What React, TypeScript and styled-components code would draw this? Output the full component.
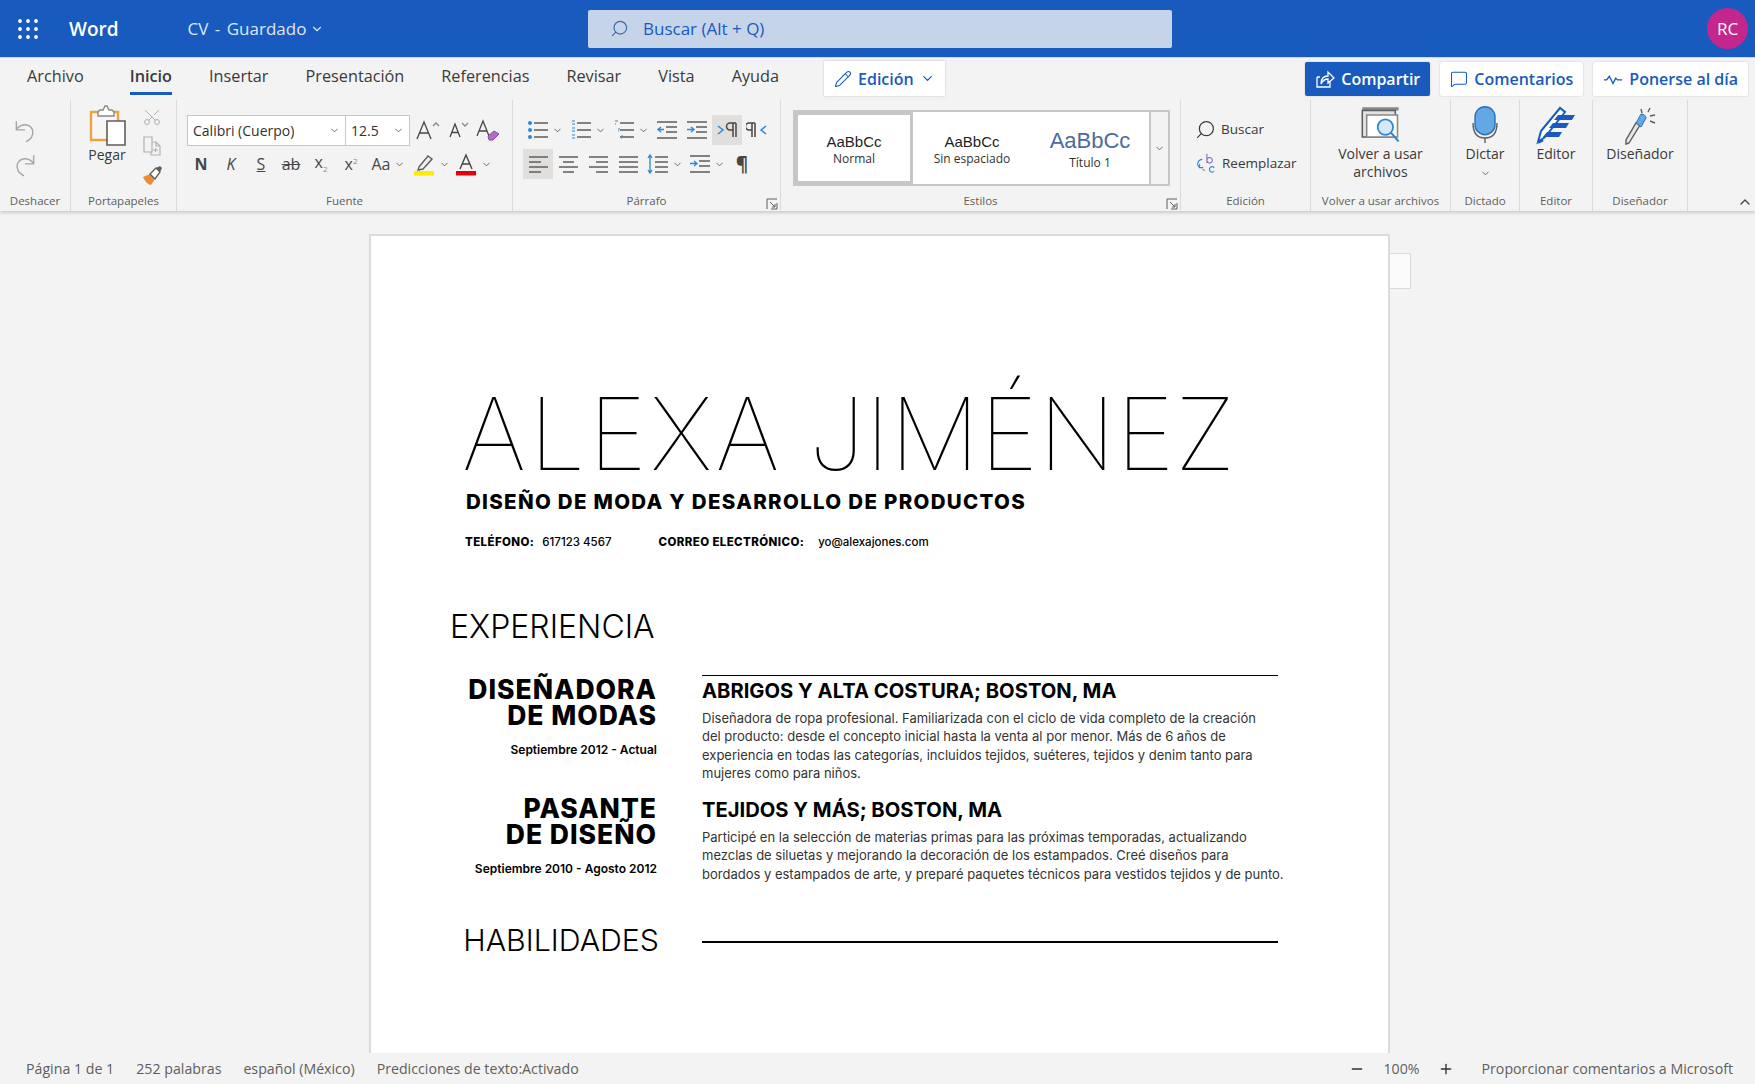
import { Fragment } from "react";
import styled, { createGlobalStyle } from "styled-components";
import {
  Scissors,
  Search,
  Pencil,
  MessageSquare,
  ChevronDown,
  ChevronUp,
  Plus,
  Minus,
} from "lucide-react";

const UI_FONT = `"Open Sans", "Noto Sans", sans-serif`;
const DOC_FONT = `Inter, "Open Sans", sans-serif`;
const BLUE = "#185abd";
const GREY = "#605e5c";
const SKY = "#2b88d8";
const CHROME = "#f3f3f3";

const GlobalStyle = createGlobalStyle`
  html, body {
    margin: 0;
    padding: 0;
    height: 100%;
    overflow: hidden;
    background: ${CHROME};
    font-family: ${UI_FONT};
  }
  #root { height: 100%; }
`;

/* ---------- drawn icons ---------- */

type IconProps = { size?: number };

const Waffle = () => (
  <svg width="20" height="20" viewBox="0 0 20 20" fill="#fff">
    {[2, 10, 18].flatMap((y) =>
      [2, 10, 18].map((x) => <circle key={`${x}-${y}`} cx={x} cy={y} r="1.9" />)
    )}
  </svg>
);

const UndoIcon = ({ flip }: { flip?: boolean }) => (
  <svg
    width="26"
    height="26"
    viewBox="0 0 24 24"
    fill="none"
    stroke="#a8a6a4"
    strokeWidth="1.3"
    style={flip ? { transform: "scaleX(-1)" } : undefined}
  >
    <path d="M4 3v8h8" />
    <path d="M4 11c3-5 9-6 13-3 4 4 2 10-1 12l-3 2" />
  </svg>
);

const ClipboardIcon = () => (
  <svg width="42" height="42" viewBox="0 0 42 42" fill="none">
    <path d="M5 7h27v28H5z" fill="#f7f6f5" stroke="#eba23f" strokeWidth="2.4" />
    <path d="M12 7l2-2h3l2-4h2l2 4h3l2 2v4H12z" fill="#fff" stroke="#8a8886" strokeWidth="1.4" />
    <path d="M21 16h18v24H21z" fill="#fff" stroke="#605e5c" strokeWidth="1.6" />
  </svg>
);

const CopyIcon = () => (
  <svg width="22" height="22" viewBox="0 0 22 22" fill="none" stroke="#b4b2b0" strokeWidth="1.2">
    <path d="M3 2h8v15H3z" />
    <path d="M11 7h4l4 4v9h-9v-3" />
    <path d="M15 7v4h4M12 15h5M14.5 13v4" />
  </svg>
);

const BrushIcon = () => (
  <svg width="22" height="22" viewBox="0 0 22 22">
    <path d="M2 12l7-3 5 5-4 6c-2 0-6-3-8-8z" fill="#ed8b34" />
    <path d="M9 9l6-6 4 4-5 7z" fill="#fff" stroke="#605e5c" strokeWidth="1.3" />
    <path d="M15 3l4-2 2 2-2 4z" fill="#605e5c" />
  </svg>
);

const GrowFont = ({ down }: { down?: boolean }) => (
  <svg width="28" height="24" viewBox="0 0 28 24" fill="none" stroke="#484644" strokeWidth="1.3">
    <path d={down ? "M6 19l5-13 5 13M8 14.5h6" : "M3 21L10 4l7 17M5.5 15h9"} />
    <path d={down ? "M18 5l3 3 3-3" : "M19 8l3-3 3 3"} stroke="#8a8886" />
  </svg>
);

const ClearFormat = () => (
  <svg width="26" height="24" viewBox="0 0 26 24" fill="none">
    <path d="M2 18L8 3l6 15M4 13h8" stroke="#484644" strokeWidth="1.3" />
    <path d="M13 18l6-5 5 3-6 6h-4z" fill="#b16cc4" stroke="#8e44ad" />
  </svg>
);

const Highlighter = () => (
  <svg width="24" height="24" viewBox="0 0 24 24" fill="none">
    <path d="M7 15L16 4l4 3-9 10-5 1z" stroke="#605e5c" strokeWidth="1.4" fill="#f3f2f1" />
    <rect x="2" y="19" width="20" height="4.5" fill="#ffeb00" />
  </svg>
);

const FontColor = () => (
  <svg width="24" height="24" viewBox="0 0 24 24" fill="none">
    <path d="M6 17L12 3l6 14M8 12h8" stroke="#484644" strokeWidth="1.4" />
    <rect x="2" y="19" width="20" height="4.5" fill="#e3000f" />
  </svg>
);

const linePath = (rows: number[], x1: number, x2: number) =>
  rows.map((y) => `M${x1} ${y}H${x2}`).join("");

const ListIcon = ({ kind }: { kind: "bullet" | "number" | "multi" }) => (
  <svg width="22" height="22" viewBox="0 0 22 22" fill="none">
    <path d={linePath([4, 11, 18], 7, 21)} stroke="#605e5c" strokeWidth="1.3" />
    {kind === "bullet" &&
      [4, 11, 18].map((y) => <circle key={y} cx="3" cy={y} r="2" fill={SKY} />)}
    {kind === "number" && <path d={linePath([2, 5, 9, 12, 16, 19], 2, 5)} stroke={SKY} strokeWidth="1.1" />}
    {kind === "multi" && <path d="M2 2h3M2 5h1M5 10h2M5 12h1M8 17h2M8 19h1" stroke={SKY} strokeWidth="1.2" />}
  </svg>
);

const IndentIcon = ({ inward }: { inward?: boolean }) => (
  <svg width="22" height="22" viewBox="0 0 22 22" fill="none">
    <path d={`M1 3H21M1 19H21${linePath([8, 13], 10, 21)}`} stroke="#605e5c" strokeWidth="1.3" />
    <path d={inward ? "M1 10.5H7M5 8l3 2.5-3 2.5" : "M2 10.5H8M5 8l-3 2.5 3 2.5"} stroke={SKY} strokeWidth="1.4" />
  </svg>
);

const AlignIcon = ({ mode }: { mode: "left" | "center" | "right" | "justify" }) => {
  const short = { left: [2, 14], center: [6, 17], right: [9, 21], justify: [2, 21] }[mode];
  return (
    <svg width="22" height="22" viewBox="0 0 22 22" fill="none" stroke="#605e5c" strokeWidth="1.3">
      <path d={`M2 4H21M${short[0]} 9H${short[1]}M2 14H21M${short[0]} 19H${short[1]}`} />
    </svg>
  );
};

const SpacingIcon = ({ indent }: { indent?: boolean }) => (
  <svg width="22" height="22" viewBox="0 0 22 22" fill="none">
    <path d={indent ? `M1 3H21M1 19H21${linePath([8, 13], 10, 21)}` : linePath([4, 9, 14, 19], 8, 21)} stroke="#605e5c" strokeWidth="1.3" />
    <path d={indent ? "M1 10.5H7M5 8l3 2.5-3 2.5" : "M3 3V19M1 5l2-3 2 3M1 17l2 3 2-3"} stroke={SKY} strokeWidth="1.3" />
  </svg>
);

const DirectionIcon = ({ rtl }: { rtl?: boolean }) => (
  <svg width="22" height="18" viewBox="0 0 22 18" fill="none">
    {rtl ? (
      <>
        <path d="M9 2H3a3.5 3.5 0 0 0 0 7h3M6 2v14M9 2v14" stroke="#484644" strokeWidth="1.5" />
        <path d="M20 5l-5 4 5 4" stroke={SKY} strokeWidth="1.5" />
      </>
    ) : (
      <>
        <path d="M2 5l5 4-5 4" stroke={SKY} strokeWidth="1.5" />
        <path d="M20 2h-6a3.5 3.5 0 0 0 0 7h3M17 2v14M20 2v14" stroke="#484644" strokeWidth="1.5" />
      </>
    )}
  </svg>
);

const Launcher = () => (
  <svg width="12" height="12" viewBox="0 0 12 12" fill="none" stroke="#605e5c" strokeWidth="1">
    <path d="M1 11V1h10M11 5v6H5M4 4l5 5M9 6v3H6" />
  </svg>
);

const ReplaceIcon = () => (
  <svg width="22" height="24" viewBox="0 0 24 24" fill="none" stroke={SKY} strokeWidth="1.2">
    <path d="M13 2v10M13 8.5a3 3 0 1 1 0 1" stroke="#8e6bb5" />
    <path d="M8 8a5 5 0 0 0-3 9M5 13v4h4" />
    <path d="M21 17a3 3 0 1 0 0 4" stroke="#2b88d8" />
    <path d="M11 20a5 5 0 0 1-3-1" stroke="#8a8886" />
  </svg>
);

const ReuseIcon = () => (
  <svg width="44" height="40" viewBox="0 0 40 36" fill="none">
    <path d="M3 1h33v3H3z" fill="#8a8886" />
    <path d="M3 4h30v24H3z" fill="#e4e3e2" stroke="#605e5c" strokeWidth="1.4" />
    <path d="M7 8h28v20H7z" fill="#fff" stroke="#8a8886" strokeWidth="1.4" />
    <circle cx="24" cy="19" r="7" fill="#d6e9f8" stroke={SKY} strokeWidth="1.6" />
    <path d="M29 24l7 8" stroke={SKY} strokeWidth="2" />
  </svg>
);

const MicIcon = () => (
  <svg width="28" height="37" viewBox="0 0 28 37" fill="none">
    <rect x="4" y="0.7" width="20" height="28" rx="10" fill="#62a8e5" stroke="#2b6fb5" strokeWidth="1.4" />
    <path d="M2 17c0 10 4 15 12 15s12-5 12-15M14 32v5" stroke="#605e5c" strokeWidth="1.4" />
  </svg>
);

const EditorIcon = () => (
  <svg width="40" height="40" viewBox="0 0 40 40" fill="none">
    <path d="M2 36l3-11L24 2l5 4L9 31z" fill="#fff" stroke={BLUE} strokeWidth="2" />
    <path d="M2 38l3-5 3 2z" fill={BLUE} />
    <path d="M22 9h17l-3 5H18zM17 17h16l-3 5H13zM11 26h15l-3 5H7z" fill={BLUE} />
  </svg>
);

const DesignerIcon = () => (
  <svg width="34" height="40" viewBox="0 0 34 40" fill="none">
    <path d="M3 38l3-1 11-18-4-2L3 34z" fill="#e8e7e6" stroke="#605e5c" strokeWidth="1.4" />
    <path d="M13 17l5-9c3 0 5 2 5 4l-5 9z" fill="#62a8e5" stroke="#2b6fb5" />
    <path d="M18 3l1 4M27 2l-2 4M32 9l-5 1M32 17l-5-2" stroke="#605e5c" strokeWidth="1.4" />
  </svg>
);

const ShareIcon = ({ size = 20 }: IconProps) => (
  <svg width={size} height={size} viewBox="0 0 20 20" fill="none" stroke="#fff" strokeWidth="1.3">
    <path d="M2 8h3M2 8v10h13v-5" />
    <path d="M6 15c0-6 3-8 7-8V3l6 6-6 5v-4c-3 0-5 1-7 5z" />
  </svg>
);

const PulseIcon = () => (
  <svg width="20" height="14" viewBox="0 0 22 14" fill="none" stroke={BLUE} strokeWidth="1.5">
    <path d="M1 8h3l3-4 4 8 3-6 2 2h5" />
  </svg>
);

/* ---------- shell ---------- */

const Shell = styled.div`
  display: flex;
  flex-direction: column;
  height: 1084px;
  overflow: hidden;
`;

const TitleBar = styled.header`
  display: grid;
  grid-template-columns: 588px 584px 1fr;
  align-items: center;
  height: 57px;
  background: ${BLUE};
  border-bottom: 1px solid #c4dcf4;
  color: #fff;
`;

const TitleLeft = styled.div`
  display: flex;
  align-items: center;
  padding-left: 18px;
`;

const AppName = styled.span`
  margin-left: 31px;
  font-size: 19px;
  font-weight: 600;
`;

const DocName = styled.span`
  display: flex;
  align-items: center;
  gap: 4px;
  margin-left: 69px;
  font-size: 17px;
  color: #dfe8f6;
  word-spacing: 2px;
`;

const SearchBox = styled.div`
  display: flex;
  align-items: center;
  gap: 14px;
  height: 38px;
  padding-left: 22px;
  box-sizing: border-box;
  background: #c6d4ea;
  border-radius: 2px;
  color: ${BLUE};
  font-size: 17px;
  svg {
    transform: scaleX(-1);
    color: #3f6aa8;
  }
`;

const TitleRight = styled.div`
  display: flex;
  justify-content: flex-end;
  padding-right: 7px;
`;

const Avatar = styled.div`
  display: flex;
  align-items: center;
  justify-content: center;
  width: 41px;
  height: 41px;
  border-radius: 50%;
  background: #c4268c;
  font-size: 17px;
`;

const TabRow = styled.nav`
  display: flex;
  align-items: flex-start;
  height: 42px;
  padding-left: 27px;
  padding-right: 7px;
`;

const Tab = styled.div<{ $active?: boolean }>`
  height: 34px;
  margin-right: 37px;
  line-height: 36px;
  font-size: 16.25px;
  color: #3b3a39;
  font-weight: ${(p) => (p.$active ? 600 : 400)};
  border-bottom: ${(p) => (p.$active ? `3px solid ${BLUE}` : "3px solid transparent")};
  &:first-child {
    margin-right: 46px;
  }
`;

const ModeButton = styled.div`
  display: flex;
  align-items: center;
  gap: 6px;
  height: 35px;
  margin-top: 3px;
  margin-left: 8px;
  padding: 0 10px;
  background: #fff;
  color: ${BLUE};
  font-size: 16px;
  font-weight: 600;
  box-shadow: 0 0 2px rgba(0, 0, 0, 0.2);
`;

const TabActions = styled.div`
  display: flex;
  gap: 10px;
  margin-left: auto;
  margin-top: 4px;
`;

const ActionButton = styled.div<{ $primary?: boolean }>`
  display: flex;
  align-items: center;
  gap: 6px;
  height: 34px;
  padding: 0 10px;
  border-radius: 2px;
  font-size: 16px;
  font-weight: 600;
  background: ${(p) => (p.$primary ? BLUE : "#fff")};
  color: ${(p) => (p.$primary ? "#fff" : BLUE)};
  box-shadow: 0 0 2px rgba(0, 0, 0, 0.2);
`;

/* ---------- ribbon ---------- */

const Ribbon = styled.section`
  display: flex;
  position: relative;
  z-index: 1;
  height: 111px;
  background: ${CHROME};
  box-shadow: 0 2px 3px rgba(0, 0, 0, 0.16);
`;

const Group = styled.div<{ $width: number }>`
  position: relative;
  display: flex;
  flex-direction: column;
  flex: none;
  width: ${(p) => p.$width}px;
  box-sizing: border-box;
  border-right: 1px solid #dcdbda;
`;

const GroupBody = styled.div<{ $pad?: number }>`
  flex: 1;
  display: flex;
  min-height: 0;
  padding-left: ${(p) => p.$pad ?? 0}px;
`;

const GroupLabel = styled.div`
  height: 21px;
  line-height: 21px;
  text-align: center;
  font-size: 11.5px;
  color: ${GREY};
`;

const LauncherSlot = styled.div`
  position: absolute;
  right: 2px;
  bottom: 1px;
  display: flex;
`;

const CollapseSlot = styled.div`
  position: absolute;
  right: 2px;
  bottom: 1px;
  color: #484644;
  display: flex;
`;

const ToolStack = styled.div`
  display: flex;
  flex-direction: column;
  gap: 4px;
  padding-top: 15px;
`;

const ToolRow = styled.div`
  display: flex;
  align-items: center;
  height: 30px;
`;

const ToolButton = styled.div<{ $w?: number; $active?: boolean }>`
  display: flex;
  align-items: center;
  justify-content: center;
  gap: 3px;
  flex: none;
  width: ${(p) => p.$w ?? 30}px;
  height: 30px;
  color: #484644;
  background: ${(p) => (p.$active ? "#e1dfdd" : "transparent")};
`;

const Caret = styled(ChevronDown).attrs({ size: 11, strokeWidth: 2 })`
  color: #605e5c;
  flex: none;
`;

const Glyph = styled.span<{ $bold?: boolean; $italic?: boolean; $under?: boolean; $strike?: boolean; $big?: boolean }>`
  font-size: ${(p) => (p.$big ? 19 : 16)}px;
  line-height: 1;
  font-weight: ${(p) => (p.$bold ? 700 : 400)};
  font-style: ${(p) => (p.$italic ? "italic" : "normal")};
  text-decoration: ${(p) => (p.$under ? "underline" : p.$strike ? "line-through" : "none")};
  color: #484644;
  sub, sup {
    font-size: 8px;
    color: #8a8886;
  }
`;

const FontBox = styled.div<{ $w: number }>`
  display: flex;
  align-items: center;
  justify-content: space-between;
  box-sizing: border-box;
  flex: none;
  width: ${(p) => p.$w}px;
  height: 31px;
  padding: 0 5px 0 5px;
  background: #fff;
  border: 1px solid #c8c6c4;
  font-size: 14px;
  color: #323130;
  & + & {
    border-left: none;
  }
`;

const FontPicker = styled.div`
  display: flex;
  margin-left: 10px;
  margin-right: 3px;
`;

const FontPickerSpacer = styled.div`
  width: 9px;
  flex: none;
`;

const UndoStack = styled.div`
  display: flex;
  flex-direction: column;
  align-items: center;
  gap: 8px;
  width: 100%;
  padding: 18px 20px 0 0;
  box-sizing: border-box;
`;

const PasteColumn = styled.div`
  display: flex;
  flex-direction: column;
  align-items: center;
  gap: 0;
  width: 60px;
  padding-top: 5px;
  font-size: 14px;
  line-height: 16px;
  color: #3b3a39;
`;

const ClipTools = styled.div`
  display: flex;
  flex-direction: column;
  align-items: center;
  gap: 8px;
  padding-top: 7px;
  width: 30px;
  color: #b4b2b0;
`;

const UprightScissors = styled(Scissors)`
  transform: rotate(-90deg);
`;

const Gallery = styled.div`
  display: flex;
  width: 377px;
  height: 76px;
  margin: 10px 0 0 12px;
  box-sizing: border-box;
  background: #fff;
  border: 2px solid #c8c6c4;
`;

const StyleCell = styled.div<{ $w: number; $selected?: boolean; $heading?: boolean }>`
  display: flex;
  flex-direction: column;
  align-items: center;
  justify-content: center;
  flex: none;
  width: ${(p) => p.$w}px;
  box-sizing: border-box;
  padding-top: 3px;
  border: ${(p) => (p.$selected ? "3px solid #c8c6c4" : "none")};
  color: #323130;
  font-size: 12px;
  line-height: 16px;
  gap: ${(p) => (p.$heading ? 1 : 0)}px;
`;

const StyleSample = styled.span<{ $heading?: boolean }>`
  font-family: "Liberation Sans", ${UI_FONT};
  font-size: ${(p) => (p.$heading ? 22 : 15)}px;
  line-height: ${(p) => (p.$heading ? 26 : 18)}px;
  color: ${(p) => (p.$heading ? "#4d6a9e" : "#201f1e")};
`;

const GalleryMore = styled.div`
  flex: 1;
  display: flex;
  align-items: center;
  justify-content: center;
  border-left: 2px solid #c8c6c4;
  background: ${CHROME};
`;

const EditTools = styled.div`
  display: flex;
  flex-direction: column;
  gap: 10px;
  padding: 17px 0 0 14px;
  font-size: 13.5px;
  color: #3b3a39;
`;

const EditRow = styled.div`
  display: flex;
  align-items: center;
  gap: 5px;
  height: 24px;
  svg {
    flex: none;
  }
`;

const MirroredSearch = styled(Search)`
  transform: scaleX(-1);
`;

const BigTool = styled.div`
  flex: 1;
  display: flex;
  flex-direction: column;
  align-items: center;
  text-align: center;
  font-size: 14px;
  line-height: 18px;
  color: #3b3a39;
  padding-top: 6px;
`;

const BigIconSlot = styled.div`
  height: 39px;
  display: flex;
  align-items: flex-start;
  justify-content: center;
`;

const DictateCaret = styled(Caret)`
  margin-top: 5px;
`;

const Spacer = styled.div`
  flex: 1;
  position: relative;
`;

/* ---------- document ---------- */

const DocArea = styled.main`
  flex: 1;
  min-height: 0;
  overflow: hidden;
  padding: 23px 0 0 369px;
  background: ${CHROME};
`;

const Page = styled.article`
  position: relative;
  width: 1021px;
  height: 100%;
  box-sizing: border-box;
  padding: 143px 0 0 79px;
  background: #fff;
  border: 2px solid #dcdbda;
  border-bottom: none;
  font-family: ${DOC_FONT};
  color: #000;
`;

const CommentTab = styled.div`
  position: absolute;
  left: 100%;
  top: 17px;
  width: 21px;
  height: 36px;
  margin-left: 2px;
  background: #fbfbfb;
  border: 1px solid #dcdbda;
  border-left: none;
  box-sizing: border-box;
`;

const Name = styled.h1`
  margin: 0 0 0 12px;
  font-size: 100px;
  line-height: 109px;
  font-weight: 100;
  word-spacing: -2px;
  white-space: nowrap;
`;

const NameWord = styled.span<{ $spacing: number }>`
  letter-spacing: ${(p) => p.$spacing}px;
`;

const Subtitle = styled.h2`
  margin: 0 0 0 16px;
  font-size: 20.5px;
  line-height: 28px;
  font-weight: 800;
  letter-spacing: 1.3px;
  white-space: nowrap;
`;

const Contact = styled.div`
  display: flex;
  margin: 18px 0 0 15px;
  font-size: 11.5px;
  line-height: 16px;
  font-weight: 500;
  white-space: nowrap;
`;

const ContactLabel = styled.strong<{ $gap: number }>`
  font-weight: 800;
  margin-right: ${(p) => p.$gap}px;
  letter-spacing: 0.4px;
`;

const ContactValue = styled.span<{ $gap?: number }>`
  margin-right: ${(p) => p.$gap ?? 0}px;
`;

const SectionTitle = styled.h3`
  margin: 57px 0 0 0;
  font-size: 32px;
  line-height: 40px;
  font-weight: 300;
`;

const Jobs = styled.div`
  display: grid;
  grid-template-columns: 207px 576px;
  column-gap: 45px;
  margin-top: 28px;
  width: 828px;
`;

const JobTitle = styled.div`
  text-align: right;
  font-size: 26.5px;
  line-height: 26px;
  font-weight: 800;
  letter-spacing: 1px;
  white-space: nowrap;
`;

const JobDate = styled.div`
  margin-top: 13px;
  text-align: right;
  font-size: 12px;
  line-height: 18px;
  font-weight: 600;
  white-space: nowrap;
`;

const JobHead = styled.div`
  display: flex;
  flex-direction: column;
  padding-top: 1px;
`;

const JobBody = styled.div<{ $ruled?: boolean }>`
  border-top: ${(p) => (p.$ruled ? "1.5px solid #000" : "1.5px solid transparent")};
  padding-top: 1px;
  height: 119px;
  box-sizing: border-box;
`;

const Company = styled.div`
  font-size: 20.2px;
  line-height: 28px;
  font-weight: 700;
  white-space: nowrap;
`;

const JobText = styled.p`
  margin: 4px 0 0;
  font-size: 13px;
  line-height: 18.4px;
  font-weight: 400;
  color: #333;
  white-space: nowrap;
`;

const SkillsRow = styled.div`
  display: grid;
  grid-template-columns: 207px 576px;
  column-gap: 45px;
  align-items: center;
  margin-top: 7px;
  width: 828px;
`;

const SkillsTitle = styled.h3`
  margin: 0 -2px 0 0;
  text-align: right;
  font-size: 30.3px;
  line-height: 40px;
  font-weight: 300;
  white-space: nowrap;
`;

const SkillsRule = styled.div`
  height: 1.5px;
  margin-top: 4px;
  background: #000;
`;

/* ---------- status bar ---------- */

const StatusBar = styled.footer`
  position: relative;
  z-index: 1;
  display: flex;
  align-items: center;
  flex: none;
  height: 31px;
  padding: 0 22px 0 26px;
  background: ${CHROME};
  font-size: 14.2px;
  color: ${GREY};
`;

const StatusItem = styled.span`
  margin-right: 22px;
`;

const StatusRight = styled.div`
  display: flex;
  align-items: center;
  gap: 18px;
  margin-left: auto;
  color: ${GREY};
  svg {
    color: #323130;
  }
`;

const Feedback = styled.span`
  margin-left: 10px;
`;

/* ---------- data ---------- */

const jobs = [
  {
    title: ["DISEÑADORA", "DE MODAS"],
    date: "Septiembre 2012 - Actual",
    company: "ABRIGOS Y ALTA COSTURA; BOSTON, MA",
    ruled: true,
    text: [
      "Diseñadora de ropa profesional. Familiarizada con el ciclo de vida completo de la creación",
      "del producto: desde el concepto inicial hasta la venta al por menor. Más de 6 años de",
      "experiencia en todas las categorías, incluidos tejidos, suéteres, tejidos y denim tanto para",
      "mujeres como para niños.",
    ],
  },
  {
    title: ["PASANTE", "DE DISEÑO"],
    date: "Septiembre 2010 - Agosto 2012",
    company: "TEJIDOS Y MÁS; BOSTON, MA",
    ruled: false,
    text: [
      "Participé en la selección de materias primas para las próximas temporadas, actualizando",
      "mezclas de siluetas y mejorando la decoración de los estampados. Creé diseños para",
      "bordados y estampados de arte, y preparé paquetes técnicos para vestidos tejidos y de punto.",
    ],
  },
];

export default function App() {
  return (
    <Shell>
      <GlobalStyle />
      <TitleBar>
        <TitleLeft>
          <Waffle />
          <AppName>Word</AppName>
          <DocName>
            CV - Guardado <ChevronDown size={14} />
          </DocName>
        </TitleLeft>
        <SearchBox>
          <Search size={19} strokeWidth={1.5} />
          Buscar (Alt + Q)
        </SearchBox>
        <TitleRight>
          <Avatar>RC</Avatar>
        </TitleRight>
      </TitleBar>

      <TabRow>
        <Tab>Archivo</Tab>
        <Tab $active>Inicio</Tab>
        <Tab>Insertar</Tab>
        <Tab>Presentación</Tab>
        <Tab>Referencias</Tab>
        <Tab>Revisar</Tab>
        <Tab>Vista</Tab>
        <Tab>Ayuda</Tab>
        <ModeButton>
          <Pencil size={18} strokeWidth={1.4} />
          Edición
          <ChevronDown size={15} />
        </ModeButton>
        <TabActions>
          <ActionButton $primary>
            <ShareIcon />
            Compartir
          </ActionButton>
          <ActionButton>
            <MessageSquare size={18} strokeWidth={1.4} />
            Comentarios
          </ActionButton>
          <ActionButton>
            <PulseIcon />
            Ponerse al día
          </ActionButton>
        </TabActions>
      </TabRow>

      <Ribbon>
        <Group $width={71}>
          <GroupBody>
            <UndoStack>
              <UndoIcon />
              <UndoIcon flip />
            </UndoStack>
          </GroupBody>
          <GroupLabel>Deshacer</GroupLabel>
        </Group>

        <Group $width={106}>
          <GroupBody $pad={6}>
            <PasteColumn>
              <ClipboardIcon />
              Pegar
            </PasteColumn>
            <ClipTools>
              <UprightScissors size={20} strokeWidth={1.2} />
              <CopyIcon />
              <BrushIcon />
            </ClipTools>
          </GroupBody>
          <GroupLabel>Portapapeles</GroupLabel>
        </Group>

        <Group $width={336}>
          <GroupBody>
            <ToolStack>
              <ToolRow>
                <FontPicker>
                  <FontBox $w={159}>
                    Calibri (Cuerpo)
                    <Caret />
                  </FontBox>
                  <FontBox $w={64}>
                    12.5
                    <Caret />
                  </FontBox>
                </FontPicker>
                <ToolButton><GrowFont /></ToolButton>
                <ToolButton><GrowFont down /></ToolButton>
                <ToolButton><ClearFormat /></ToolButton>
              </ToolRow>
              <ToolRow>
                <FontPickerSpacer />
                <ToolButton><Glyph $bold>N</Glyph></ToolButton>
                <ToolButton><Glyph $italic>K</Glyph></ToolButton>
                <ToolButton><Glyph $under>S</Glyph></ToolButton>
                <ToolButton><Glyph $strike>ab</Glyph></ToolButton>
                <ToolButton><Glyph>x<sub>2</sub></Glyph></ToolButton>
                <ToolButton><Glyph>x<sup>2</sup></Glyph></ToolButton>
                <ToolButton $w={44}><Glyph>Aa</Glyph><Caret /></ToolButton>
                <ToolButton $w={42}><Highlighter /><Caret /></ToolButton>
                <ToolButton $w={42}><FontColor /><Caret /></ToolButton>
              </ToolRow>
            </ToolStack>
          </GroupBody>
          <GroupLabel>Fuente</GroupLabel>
        </Group>

        <Group $width={268}>
          <GroupBody $pad={10}>
            <ToolStack>
              <ToolRow>
                <ToolButton $w={43}><ListIcon kind="bullet" /><Caret /></ToolButton>
                <ToolButton $w={43}><ListIcon kind="number" /><Caret /></ToolButton>
                <ToolButton $w={43}><ListIcon kind="multi" /><Caret /></ToolButton>
                <ToolButton><IndentIcon /></ToolButton>
                <ToolButton><IndentIcon inward /></ToolButton>
                <ToolButton $active><DirectionIcon /></ToolButton>
                <ToolButton><DirectionIcon rtl /></ToolButton>
              </ToolRow>
              <ToolRow>
                <ToolButton $active><AlignIcon mode="left" /></ToolButton>
                <ToolButton><AlignIcon mode="center" /></ToolButton>
                <ToolButton><AlignIcon mode="right" /></ToolButton>
                <ToolButton><AlignIcon mode="justify" /></ToolButton>
                <ToolButton $w={43}><SpacingIcon /><Caret /></ToolButton>
                <ToolButton $w={42}><SpacingIcon indent /><Caret /></ToolButton>
                <ToolButton $w={28}><Glyph $bold $big>¶</Glyph></ToolButton>
              </ToolRow>
            </ToolStack>
          </GroupBody>
          <GroupLabel>Párrafo</GroupLabel>
          <LauncherSlot><Launcher /></LauncherSlot>
        </Group>

        <Group $width={400}>
          <GroupBody>
            <Gallery>
              <StyleCell $w={118} $selected>
                <StyleSample>AaBbCc</StyleSample>
                Normal
              </StyleCell>
              <StyleCell $w={118}>
                <StyleSample>AaBbCc</StyleSample>
                Sin espaciado
              </StyleCell>
              <StyleCell $w={118} $heading>
                <StyleSample $heading>AaBbCc</StyleSample>
                Título 1
              </StyleCell>
              <GalleryMore><Caret /></GalleryMore>
            </Gallery>
          </GroupBody>
          <GroupLabel>Estilos</GroupLabel>
          <LauncherSlot><Launcher /></LauncherSlot>
        </Group>

        <Group $width={130}>
          <GroupBody>
            <EditTools>
              <EditRow>
                <MirroredSearch size={21} strokeWidth={1.4} />
                Buscar
              </EditRow>
              <EditRow>
                <ReplaceIcon />
                Reemplazar
              </EditRow>
            </EditTools>
          </GroupBody>
          <GroupLabel>Edición</GroupLabel>
        </Group>

        <Group $width={140}>
          <GroupBody>
            <BigTool>
              <BigIconSlot><ReuseIcon /></BigIconSlot>
              <span>Volver a usar<br />archivos</span>
            </BigTool>
          </GroupBody>
          <GroupLabel>Volver a usar archivos</GroupLabel>
        </Group>

        <Group $width={69}>
          <GroupBody>
            <BigTool>
              <BigIconSlot><MicIcon /></BigIconSlot>
              Dictar
              <DictateCaret />
            </BigTool>
          </GroupBody>
          <GroupLabel>Dictado</GroupLabel>
        </Group>

        <Group $width={73}>
          <GroupBody>
            <BigTool>
              <BigIconSlot><EditorIcon /></BigIconSlot>
              Editor
            </BigTool>
          </GroupBody>
          <GroupLabel>Editor</GroupLabel>
        </Group>

        <Group $width={95}>
          <GroupBody>
            <BigTool>
              <BigIconSlot><DesignerIcon /></BigIconSlot>
              Diseñador
            </BigTool>
          </GroupBody>
          <GroupLabel>Diseñador</GroupLabel>
        </Group>

        <Spacer>
          <CollapseSlot><ChevronUp size={16} /></CollapseSlot>
        </Spacer>
      </Ribbon>

      <DocArea>
        <Page>
          <CommentTab />
          <Name>
            <NameWord $spacing={3.2}>ALEXA</NameWord>{" "}
            <NameWord $spacing={0.3}>JIMÉNEZ</NameWord>
          </Name>
          <Subtitle>DISEÑO DE MODA Y DESARROLLO DE PRODUCTOS</Subtitle>
          <Contact>
            <ContactLabel $gap={8}>TELÉFONO:</ContactLabel>
            <ContactValue $gap={47}>617123 4567</ContactValue>
            <ContactLabel $gap={14}>CORREO ELECTRÓNICO:</ContactLabel>
            <ContactValue>yo@alexajones.com</ContactValue>
          </Contact>
          <SectionTitle>EXPERIENCIA</SectionTitle>
          <Jobs>
            {jobs.map((job) => (
              <Fragment key={job.company}>
                <JobHead>
                  <JobTitle>{job.title[0]}<br />{job.title[1]}</JobTitle>
                  <JobDate>{job.date}</JobDate>
                </JobHead>
                <JobBody $ruled={job.ruled}>
                  <Company>{job.company}</Company>
                  <JobText>
                    {job.text.map((line) => (
                      <Fragment key={line}>{line}<br /></Fragment>
                    ))}
                  </JobText>
                </JobBody>
              </Fragment>
            ))}
          </Jobs>
          <SkillsRow>
            <SkillsTitle>HABILIDADES</SkillsTitle>
            <SkillsRule />
          </SkillsRow>
        </Page>
      </DocArea>

      <StatusBar>
        <StatusItem>Página 1 de 1</StatusItem>
        <StatusItem>252 palabras</StatusItem>
        <StatusItem>español (México)</StatusItem>
        <StatusItem>Predicciones de texto:Activado</StatusItem>
        <StatusRight>
          <Minus size={16} />
          100%
          <Plus size={16} />
          <Feedback>Proporcionar comentarios a Microsoft</Feedback>
        </StatusRight>
      </StatusBar>
    </Shell>
  );
}
